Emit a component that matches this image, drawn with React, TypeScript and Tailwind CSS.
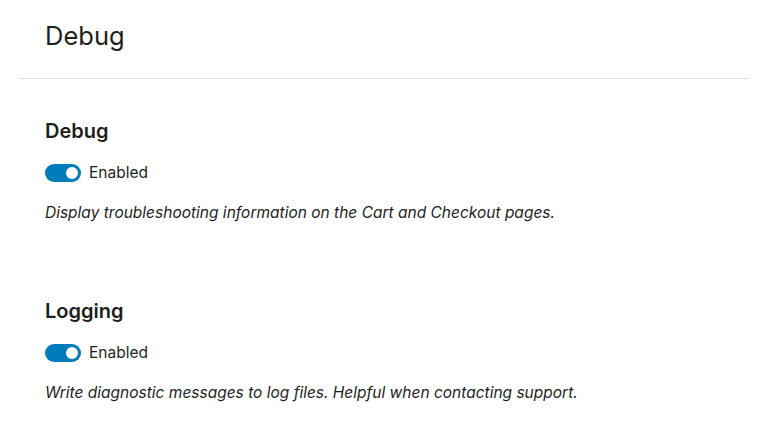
import React from "react";

function Toggle() {
  return (
    <span className="relative inline-flex h-[18px] w-[36px] shrink-0 items-center rounded-full bg-[#007cba]">
      <span className="absolute right-[3px] top-[3px] h-[12px] w-[12px] rounded-full bg-white" />
    </span>
  );
}

function Section({ title, desc }: { title: string; desc: string }) {
  return (
    <div className="flex flex-col">
      <h2 className="text-[20px] leading-[28px] font-semibold text-[#1e1e1e]">{title}</h2>
      <div className="mt-[16px] flex h-[24px] items-center gap-[8px]">
        <Toggle />
        <span className="text-[15.5px] text-[#1e1e1e]">Enabled</span>
      </div>
      <p className="mt-[16px] text-[15.5px] leading-[24px] italic text-[#1e1e1e]">{desc}</p>
    </div>
  );
}

export default function App() {
  return (
    <div
      className="min-h-[425px] w-[768px] bg-white"
      style={{ fontFamily: "Inter, 'Noto Sans', sans-serif" }}
    >
      <div className="mx-[18px] border-b border-[#e0e0e0] px-[27px] pb-[26px] pt-[20px]">
        <h1 className="text-[25.5px] leading-[32px] font-normal text-[#1e1e1e]">Debug</h1>
      </div>
      <div className="flex flex-col gap-[72px] px-[45px] pt-[38px]">
        <Section
          title="Debug"
          desc="Display troubleshooting information on the Cart and Checkout pages."
        />
        <Section
          title="Logging"
          desc="Write diagnostic messages to log files. Helpful when contacting support."
        />
      </div>
    </div>
  );
}
